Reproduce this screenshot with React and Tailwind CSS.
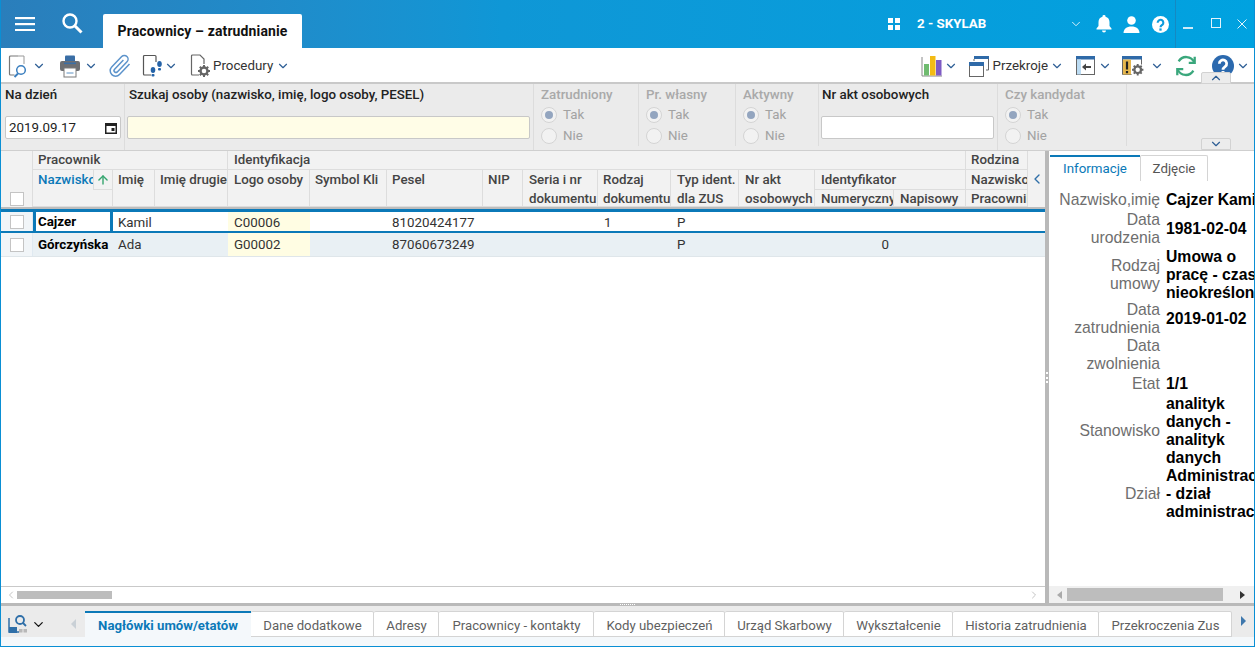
import React from "react";
import { ChevronDown, ChevronLeft, ChevronUp, ArrowUp } from "lucide-react";

const Chev = ({ className = "text-[#2f5f96]", size = 14 }) => (
  <ChevronDown size={size} strokeWidth={2} className={className} />
);

const DocMagnifier = () => (
  <svg width="22" height="24" viewBox="0 0 22 24" fill="none">
    <path d="M10 2H2.500a1 1 0 0 0-1 1v17a1 1 0 0 0 1 1h4" stroke="#777" strokeWidth="1.200" />
    <path d="M10 2h6v8" stroke="#999" strokeWidth="1" />
    <circle cx="13" cy="16" r="4.300" stroke="#3b7fbf" strokeWidth="1.500" />
    <path d="M10 19.500 6.500 23" stroke="#3b7fbf" strokeWidth="2" />
  </svg>
);
const Printer = () => (
  <svg width="22" height="24" viewBox="0 0 22 24" fill="none">
    <path d="M6 2.500a1 1 0 0 1 1-1h8a1 1 0 0 1 1 1V7H6z" fill="#3a6ea5" />
    <rect x="1" y="7" width="20" height="10" rx="2" fill="#6d6f73" />
    <rect x="5" y="8.500" width="12" height="1.600" fill="#3a6ea5" />
    <rect x="5" y="14" width="12" height="9" fill="#fff" stroke="#7b7b7b" />
    <path d="M7.500 19h7" stroke="#8ab0d4" strokeWidth="1.400" />
  </svg>
);
const Clip = () => (
  <svg width="22" height="24" viewBox="0 0 22 24" fill="none" stroke="#5c93cb" strokeWidth="1.500">
    <path d="m20.500 10-10 10.500a5.400 5.400 0 0 1-7.800-7.500l10-10.500a3.700 3.700 0 0 1 5.300 5.200l-9.700 10.200a1.900 1.900 0 0 1-2.700-2.700l8.800-9.200" />
  </svg>
);
const DocFeet = () => (
  <svg width="22" height="24" viewBox="0 0 22 24" fill="none">
    <path d="M9 21H2.500a1 1 0 0 1-1-1V2.500a1 1 0 0 1 1-1H13a1 1 0 0 1 1 1V8" stroke="#555" strokeWidth="1.200" />
    <ellipse cx="11" cy="16" rx="2.300" ry="3" fill="#2563a8" />
    <rect x="9.500" y="20" width="3" height="2.500" rx="1" fill="#2563a8" />
    <ellipse cx="17.500" cy="10" rx="2.300" ry="3" fill="#2563a8" />
    <rect x="16" y="14" width="3" height="2.500" rx="1" fill="#2563a8" />
  </svg>
);
const Gear = ({ x = 0, y = 0, s = 1, c = "#666" }) => (
  <g transform={`translate(${x} ${y}) scale(${s})`}>
    <circle cx="6" cy="6" r="3.500" fill="none" stroke={c} strokeWidth="2.400" />
    <path d="M6 0v2.500M6 9.500V12M0 6h2.500M9.500 6H12M1.800 1.800l1.800 1.800M8.400 8.400l1.800 1.800M10.200 1.800 8.400 3.600M3.600 8.400l-1.800 1.800" stroke={c} strokeWidth="2" />
  </g>
);
const DocGear = () => (
  <svg width="24" height="24" viewBox="0 0 24 24" fill="none">
    <path d="M9 21H2.500a1 1 0 0 1-1-1V2a1 1 0 0 1 1-1H10l4 4v5" stroke="#666" strokeWidth="1.200" />
    <Gear x={8} y={11} />
  </svg>
);
const BarsIcon = () => (
  <svg width="24" height="24" viewBox="0 0 24 24">
    <path d="M2 3v19h20" fill="none" stroke="#888" strokeWidth="1" />
    <rect x="4" y="10" width="5" height="11.500" fill="#6fbb6f" />
    <rect x="10" y="2" width="5.500" height="19.500" fill="#f3bb14" />
    <rect x="16" y="6" width="5.500" height="15.500" fill="#7e5bc4" />
  </svg>
);
const Sections = () => (
  <svg width="20" height="21" viewBox="0 0 20 21" fill="none">
    <path d="M5 0h15v3H5z" fill="#2f6aa8" />
    <path d="M19.500 3v11H17" stroke="#666" />
    <path d="M5 3v2" stroke="#666" />
    <rect x="0.500" y="6.500" width="14" height="14" fill="#fff" stroke="#666" />
    <rect x="0" y="6" width="15" height="4" fill="#2f6aa8" />
  </svg>
);
const PanelArrow = () => (
  <svg width="20" height="20" viewBox="0 0 20 20" fill="none">
    <rect x="0.500" y="0.500" width="18" height="18" fill="#fff" stroke="#666" />
    <rect x="0" y="0" width="19" height="3.500" fill="#2f6aa8" />
    <rect x="1" y="3.500" width="4" height="15" fill="#bcdcf3" />
    <path d="M15 11H9" stroke="#444" strokeWidth="2" />
    <path d="M10 7.500v7L6 11z" fill="#444" />
  </svg>
);
const PanelWarn = () => (
  <svg width="22" height="20" viewBox="0 0 22 20" fill="none">
    <path d="M0.500 0.500h19v8M0.500 0.500v18h9" stroke="#666" />
    <rect x="0" y="0" width="20" height="3.500" fill="#2f6aa8" />
    <rect x="1" y="3.500" width="8" height="15" fill="#e6b74e" />
    <path d="M5 5.500v8" stroke="#222" strokeWidth="2.200" />
    <rect x="3.900" y="15" width="2.200" height="2.200" fill="#222" />
    <Gear x={10} y={8} s={0.95} />
  </svg>
);
const Refresh = () => (
  <svg width="22" height="22" viewBox="0 0 24 24" fill="none" stroke="#3aa77c" strokeWidth="2.500">
    <path d="M21 8a9.500 9.500 0 0 0-17-1" />
    <path d="M21.500 2v6.500H15" />
    <path d="M3 16a9.500 9.500 0 0 0 17 1" />
    <path d="M2.500 22v-6.500H9" />
  </svg>
);
const Help = ({ size = 22, bg = "#2b69ae", fg = "#fff" }) => (
  <svg width={size} height={size} viewBox="0 0 24 24">
    <circle cx="12" cy="12" r="12" fill={bg} />
    <path d="M8 9.500a4 4 0 1 1 6.500 3c-1.600 1.200-2.500 1.800-2.500 3.500" fill="none" stroke={fg} strokeWidth="3" />
    <rect x="10.400" y="17.500" width="3.200" height="3.200" fill={fg} />
  </svg>
);

const Radio = ({ on }) => (
  <span className="w-4 h-4 rounded-full border border-[#d4d4d4] bg-[#f2f2f2] flex items-center justify-center shrink-0">
    {on && <span className="w-2 h-2 rounded-full bg-[#93a5bf]" />}
  </span>
);
const RadioGroup = ({ title, w }) => (
  <div className={`${w} pl-[7px] h-[62px] shrink-0 border-r border-[#dcdcdc] flex flex-col text-[13.33px] text-[#a9a9a9]`}>
    <div className="font-medium leading-[16px] mt-[3px] whitespace-nowrap">{title}</div>
    <div className="flex items-center gap-[6px] mt-[2px] h-[20px]"><Radio on /><span className="text-[#a2a2a2]">Tak</span></div>
    <div className="flex items-center gap-[6px] mt-px h-[20px]"><Radio /><span className="text-[#a2a2a2]">Nie</span></div>
  </div>
);

const columns = "grid-cols-[32px_80px_42px_73px_82px_77px_96px_40px_75px_73px_68px_76px_79px_72px_62px_17px]";
const Cell = ({ className = "", color = "text-[#444]", children }) => (
  <div className={`border-r border-b border-[#dddddd] px-[5px] text-[13.33px] leading-[18px] font-medium whitespace-nowrap overflow-hidden ${color} ${className}`}>
    {children}
  </div>
);
const HeadTwo = ({ a, b, className = "" }) => (
  <Cell className={`row-span-2 pt-px ${className}`}>
    <div className="h-[19px]">{a}</div>
    <div>{b}</div>
  </Cell>
);

const Box = ({ className = "" }) => <span className={`block w-[14px] h-[14px] border border-[#c4c4c4] bg-white ${className}`} />;

const Row = ({ selected, nazwisko, imie, logo, pesel, rodzaj, num }) => (
  <div className={`grid ${columns} items-center text-[13.33px] text-[#333] ${selected ? "h-[19px] bg-white" : "h-[24px] bg-[#e9f0f4] border-b border-[#dfe6ea]"}`}>
    <div className="h-full flex items-center justify-center bg-[#f1f5f8] border-r border-[#dfe9f1]"><Box /></div>
    <div className={`h-full flex items-center font-bold text-black ${selected ? "border-x-[3px] border-b border-[#0b79b8] pl-[2px]" : "pl-[5px]"}`}>{nazwisko}</div>
    <div className="pl-[5px]">{imie}</div>
    <div />
    <div className="h-full flex items-center pl-[6px] bg-[#fffde3]">{logo}</div>
    <div />
    <div className="pl-[5px]">{pesel}</div>
    <div />
    <div />
    <div className="pl-[6px]">{rodzaj}</div>
    <div className="pl-[6px]">P</div>
    <div />
    <div className="text-right pr-[5px]">{num}</div>
    <div />
    <div />
    <div />
  </div>
);

const Info = ({ label, children, className = "" }) => (
  <div className={`flex items-center text-[15.75px] leading-[18px] ${className}`}>
    <div className="w-[111px] shrink-0 text-right text-[#6e6e6e]">{label}</div>
    <div className="ml-[6px] font-bold text-black whitespace-nowrap">{children}</div>
  </div>
);

const Tab = ({ children, w, active }) => (
  <div className={`${w} shrink-0 h-[26px] flex items-center justify-center whitespace-nowrap ${active ? "pt-[2px] bg-[#f4f8fb] border-t-2 border-[#0b79b8] text-[#0b79b8] font-bold text-[13.2px]" : "pt-[3px] pl-px bg-white border border-[#d4d4d4] border-l-0 rounded-t-[2px] text-[#5f5f5f] text-[13.2px]"}`}>
    {children}
  </div>
);

export default function App() {
  return (
    <div className="w-[1255px] h-[647px] overflow-hidden flex flex-col bg-white font-['Roboto',sans-serif] border-x border-b border-[#0a8fd4] box-border">
      {/* title bar */}
      <div className="-mx-px h-[48px] shrink-0 flex bg-gradient-to-r from-[#2a7ebb] via-[#0f97d6] via-40% to-[#00a2e0] text-white relative">
        <div className="w-[103px] flex items-center pl-[15px] gap-[27px] pb-[1px]">
          <svg width="20" height="14" viewBox="0 0 20 14" fill="#fff"><rect width="20" height="2.200" /><rect y="6" width="20" height="2.200" /><rect y="12" width="20" height="2.200" /></svg>
          <svg width="21" height="21" viewBox="0 0 21 21" fill="none" stroke="#fff"><circle cx="8" cy="8" r="6.500" strokeWidth="2.400" /><path d="m13 13 6.500 6.500" strokeWidth="3" /></svg>
        </div>
        <div className="w-[199px] h-[34px] mt-[14px] bg-white rounded-t-[2px] flex items-center justify-center text-[14px] font-bold text-[#111] tracking-[0.12px]">Pracownicy – zatrudnianie</div>
        <div className="flex-1 flex items-center pl-[586px]">
          <svg className="shrink-0" width="12" height="12" viewBox="0 0 12 12" fill="#fff"><rect width="5" height="5" /><rect x="7" width="5" height="5" /><rect y="7" width="5" height="5" /><rect x="7" y="7" width="5" height="5" /></svg>
          <span className="ml-[17px] w-[68px] shrink-0 whitespace-nowrap text-[13.33px] font-bold">2 - SKYLAB</span>
          <ChevronDown size={14} strokeWidth={1.600} className="ml-[84px] shrink-0 opacity-90" />
          <svg className="ml-[13px] shrink-0" width="16" height="18" viewBox="0 0 16 18" fill="#fff"><path d="M8 0a1.500 1.500 0 0 1 1.500 1.700C12 2.300 13.500 4.300 13.500 7v4l2 2.500v1H.5v-1l2-2.500V7c0-2.700 1.500-4.700 4-5.300A1.500 1.500 0 0 1 8 0z" /><path d="M6 15.500h4a2 2 0 0 1-4 0z" /></svg>
          <svg className="ml-[11px] shrink-0" width="17" height="17" viewBox="0 0 17 17" fill="#fff"><circle cx="8.500" cy="4.500" r="4.300" /><path d="M0.500 17c0-3.800 3-6.500 8-6.500s8 2.700 8 6.500z" /></svg>
          <span className="ml-[12px] shrink-0"><Help size={17} bg="#fff" fg="#0f9cdc" /></span>
          <div className="ml-[6px] w-px h-[48px] shrink-0 bg-[#1589c2]" />
          <div className="w-[79px] h-[48px] shrink-0 relative">
            <span className="absolute left-[7px] top-[27px] w-[10px] h-[1.500px] bg-[#cfeaf8]" />
            <span className="absolute left-[35px] top-[18px] w-[10px] h-[10px] border border-[#e3f3fb]" />
            <svg className="absolute left-[61px] top-[19px]" width="10" height="10" viewBox="0 0 10 10" stroke="#e3f3fb" strokeWidth="1"><path d="m0.500 0.500 9 9M9.500 0.500l-9 9" /></svg>
          </div>
        </div>
      </div>

      {/* toolbar */}
      <div className="h-[36px] shrink-0 flex items-center border-b-2 border-[#c9c9c9] pl-[7px] pt-[2px] relative">
        <DocMagnifier /><span className="ml-[2px]"><Chev /></span>
        <span className="ml-[13px]"><Printer /></span><span className="ml-[3px]"><Chev /></span>
        <span className="ml-[11px]"><Clip /></span>
        <span className="ml-[11px]"><DocFeet /></span><Chev />
        <span className="ml-[12px]"><DocGear /></span>
        <span className="-ml-px text-[13.33px] text-[#333]">Procedury</span><span className="ml-[3px]"><Chev /></span>
        <div className="ml-auto flex items-center pr-[4px]">
          <BarsIcon /><Chev />
          <span className="ml-[11px]"><Sections /></span>
          <span className="ml-[4px] text-[13.33px] text-[#333]">Przekroje</span><span className="ml-[2px]"><Chev /></span>
          <span className="ml-[12px]"><PanelArrow /></span><span className="ml-[2px]"><Chev /></span>
          <span className="ml-[10px]"><PanelWarn /></span><span className="ml-[6px]"><Chev /></span>
          <span className="ml-[11px]"><Refresh /></span>
          <span className="ml-[15px]"><Help /></span><span className="ml-[2px]"><Chev /></span>
        </div>
        <div className="absolute right-[23px] bottom-[-2px] w-[30px] h-[12px] bg-[#ececec] border border-[#d2d2d2] rounded-t-[2px] flex items-center justify-center"><ChevronUp size={14} strokeWidth={2} className="text-[#2f5f96]" /></div>
      </div>

      {/* filter bar */}
      <div className="h-[67px] shrink-0 flex bg-[#ebebeb] border-b border-[#cfcfcf] relative">
        <div className="w-[124px] shrink-0 border-r border-[#dcdcdc] pl-[4px] pr-[3px]">
          <div className="mt-[3px] text-[13.33px] font-medium leading-[16px] text-[#222]">Na dzień</div>
          <div className="mt-[13px] h-[23px] bg-white border border-[#c8c8c8] rounded-[2px] flex items-center justify-between px-[3px] text-[13.33px] text-[#222]">
            2019.09.17
            <svg width="12" height="12" viewBox="0 0 12 12"><rect x="0.750" y="1.750" width="10.500" height="9.500" fill="none" stroke="#222" strokeWidth="1.500" /><rect x="1" y="1" width="10" height="3" fill="#222" /><rect x="6.500" y="6" width="3" height="3" fill="#222" /></svg>
          </div>
        </div>
        <div className="w-[409px] shrink-0 border-r border-[#dcdcdc] pl-[2px] pr-[3px]">
          <div className="ml-[2px] mt-[3px] text-[13.33px] font-medium leading-[16px] text-[#222] whitespace-nowrap">Szukaj osoby (nazwisko, imię, logo osoby, PESEL)</div>
          <div className="mt-[13px] h-[23px] bg-[#fffde7] border border-[#c8c8c8] rounded-[2px]" />
        </div>
        <RadioGroup title="Zatrudniony" w="w-[105px]" />
        <RadioGroup title="Pr. własny" w="w-[97px]" />
        <RadioGroup title="Aktywny" w="w-[83px]" />
        <div className="w-[179px] shrink-0 border-r border-[#dcdcdc] pl-[2px] pr-[3px]">
          <div className="ml-[1px] mt-[3px] text-[13.33px] font-medium leading-[16px] text-[#222]">Nr akt osobowych</div>
          <div className="mt-[13px] h-[23px] bg-white border border-[#c8c8c8] rounded-[2px]" />
        </div>
        <RadioGroup title="Czy kandydat" w="w-[129px]" />
        <div className="absolute right-[23px] bottom-0 w-[30px] h-[12px] bg-[#ececec] border border-[#d2d2d2] rounded-t-[2px] flex items-center justify-center"><ChevronDown size={14} strokeWidth={2} className="text-[#2f5f96]" /></div>
      </div>

      {/* main */}
      <div className="flex-1 min-h-0 flex">
        <div className="w-[1044px] shrink-0 flex flex-col">
          <div className={`grid ${columns} grid-rows-[19px_20px_17px] h-[56px] bg-[#f2f2f2]`}>
            <Cell className="row-span-3 relative border-b-0"><Box className="absolute left-[9px] bottom-[1px]" /></Cell>
            <Cell className="col-span-3">Pracownik</Cell>
            <Cell className="col-span-10 pl-[6px]">Identyfikacja</Cell>
            <Cell>Rodzina</Cell>
            <div className="row-span-3 flex items-center justify-center bg-[#f2f2f2]"><ChevronLeft size={16} strokeWidth={2} className="text-[#2f6fa8]" /></div>

            <Cell className="row-span-2 pt-px relative font-bold" color="text-[#0b79b8]">
              Nazwisko
              <span className="absolute right-0 top-0 w-[19px] h-[20px] bg-[#f2f2f2] border-l border-b border-[#dddddd] flex items-center justify-center"><ArrowUp size={14} strokeWidth={2.400} className="text-[#35a56f]" /></span>
            </Cell>
            <Cell className="row-span-2 pt-px">Imię</Cell>
            <Cell className="row-span-2 pt-px">Imię drugie</Cell>
            <Cell className="row-span-2 pt-px pl-[6px]">Logo osoby</Cell>
            <Cell className="row-span-2 pt-px">Symbol Kli</Cell>
            <Cell className="row-span-2 pt-px">Pesel</Cell>
            <Cell className="row-span-2 pt-px">NIP</Cell>
            <HeadTwo className="pl-[6px]" a="Seria i nr" b="dokumentu" />
            <HeadTwo a="Rodzaj" b="dokumentu" />
            <HeadTwo className="pl-[6px]" a="Typ ident." b="dla ZUS" />
            <HeadTwo className="pl-[6px]" a="Nr akt" b="osobowych" />
            <Cell className="col-span-2 pt-px pl-[6px]">Identyfikator</Cell>
            <Cell className="pt-px">Nazwisko</Cell>
            <Cell className="pl-[6px]">Numeryczny</Cell>
            <Cell className="pl-[6px]">Napisowy</Cell>
            <Cell>Pracownik</Cell>
          </div>
          <div className="h-[2px] bg-[#bdbdbd]" />
          <div className="h-[3px] bg-[#0b79b8]" />
          <Row selected nazwisko="Cajzer" imie="Kamil" logo="C00006" pesel="81020424177" rodzaj="1" />
          <div className="h-[2px] bg-[#0b79b8]" />
          <Row nazwisko="Górczyńska" imie="Ada" logo="G00002" pesel="87060673249" num="0" />
          <div className="flex-1" />
          <div className="h-[17px] shrink-0 border-t border-[#c9c9c9] flex items-center px-[5px]">
            <ChevronLeft size={12} className="text-[#c4c4c4] -ml-[1px]" />
            <div className="w-[95px] h-[8px] bg-[#bdbdbd]" />
            <ChevronLeft size={12} className="ml-auto rotate-180 text-[#c4c4c4]" />
          </div>
        </div>
        <div className="w-[4px] shrink-0 bg-[#b9b9b9] relative">
          <span className="absolute left-[1px] top-[221px] w-[2px] h-[11px] border-l-2 border-dotted border-white" />
        </div>
        <div className="flex-1 min-w-0 flex flex-col">
          <div className="h-[32px] shrink-0 pt-[4px] pl-[1px] flex">
            <div className="w-[90px] h-[26px] bg-white border-t-2 border-[#0b79b8] flex items-center justify-center text-[13.33px] text-[#0b79b8]">Informacje</div>
            <div className="w-[68px] h-[26px] bg-white border border-[#d4d4d4] border-b-0 rounded-t-[2px] flex items-center justify-center text-[13.33px] text-[#555]">Zdjęcie</div>
          </div>
          <div className="flex-1 min-h-0 overflow-hidden pt-[8px] font-['Liberation_Sans',sans-serif]">
            <Info label="Nazwisko,imię">Cajzer Kamil</Info>
            <Info className="mt-[2px]" label={<>Data<br />urodzenia</>}>1981-02-04</Info>
            <Info className="mt-px" label={<>Rodzaj<br />umowy</>}>Umowa o<br />pracę - czas<br />nieokreślony</Info>
            <Info className="-mt-px" label={<>Data<br />zatrudnienia</>}>2019-01-02</Info>
            <Info label={<>Data<br />zwolnienia</>} />
            <Info className="mt-[2px]" label="Etat">1/1</Info>
            <Info className="mt-[2px]" label="Stanowisko">analityk<br />danych -<br />analityk<br />danych</Info>
            <Info label="Dział">Administracja<br />- dział<br />administracja</Info>
          </div>
          <div className="h-[17px] shrink-0 bg-[#f0f0f0] flex items-center px-[6px]">
            <span className="ml-[2px] w-0 h-0 border-y-[4px] border-y-transparent border-r-[5px] border-r-[#aaa]" />
            <div className="w-[156px] h-[13px] ml-[5px] bg-[#bdbdbd]" />
            <span className="ml-auto mr-[3px] w-0 h-0 border-y-[4px] border-y-transparent border-l-[5px] border-l-[#333]" />
          </div>
        </div>
      </div>

      {/* bottom tabs */}
      <div className="h-[43px] shrink-0 border-t-[3px] border-[#b9b9b9] bg-[#ebebeb] flex flex-col relative">
        <span className="absolute left-[619px] -top-[2px] w-[15px] h-px border-t border-dotted border-white" />
        <div className="h-[26px] mt-[5px] flex shrink-0 items-start">
          <div className="w-[84px] shrink-0 h-[26px] flex items-center pl-[7px]">
            <svg width="20" height="20" viewBox="0 0 20 20" fill="none">
              <path d="M1 4v14h10" stroke="#2f6fa8" strokeWidth="1.500" />
              <rect x="1" y="13" width="8" height="6" fill="#2f6fa8" />
              <rect x="11" y="15" width="3.500" height="3.500" fill="#b8b8b8" /><rect x="15.500" y="15" width="3.500" height="3.500" fill="#b8b8b8" />
              <circle cx="12" cy="6" r="4" stroke="#2f6fa8" strokeWidth="1.800" />
              <path d="m15 9 3 3" stroke="#2f6fa8" strokeWidth="1.800" />
            </svg>
            <ChevronDown size={15} strokeWidth={2} className="ml-[3px] text-[#111]" />
            <span className="ml-[25px] w-0 h-0 border-y-[5px] border-y-transparent border-r-[5px] border-r-[#c9d0d6]" />
          </div>
          <Tab w="w-[166px]" active>Nagłówki umów/etatów</Tab>
          <Tab w="w-[123px]">Dane dodatkowe</Tab>
          <Tab w="w-[65px]">Adresy</Tab>
          <Tab w="w-[155px]">Pracownicy - kontakty</Tab>
          <Tab w="w-[131px]">Kody ubezpieczeń</Tab>
          <Tab w="w-[119px]">Urząd Skarbowy</Tab>
          <Tab w="w-[109px]">Wykształcenie</Tab>
          <Tab w="w-[146px]">Historia zatrudnienia</Tab>
          <Tab w="w-[133px]">Przekroczenia Zus</Tab>
          <span className="ml-[9px] mt-[5px] w-0 h-0 border-y-[5px] border-y-transparent border-l-[5px] border-l-[#3f78ad]" />
        </div>
        <div className="flex-1 bg-[#f4f8fb]" />
      </div>
    </div>
  );
}
